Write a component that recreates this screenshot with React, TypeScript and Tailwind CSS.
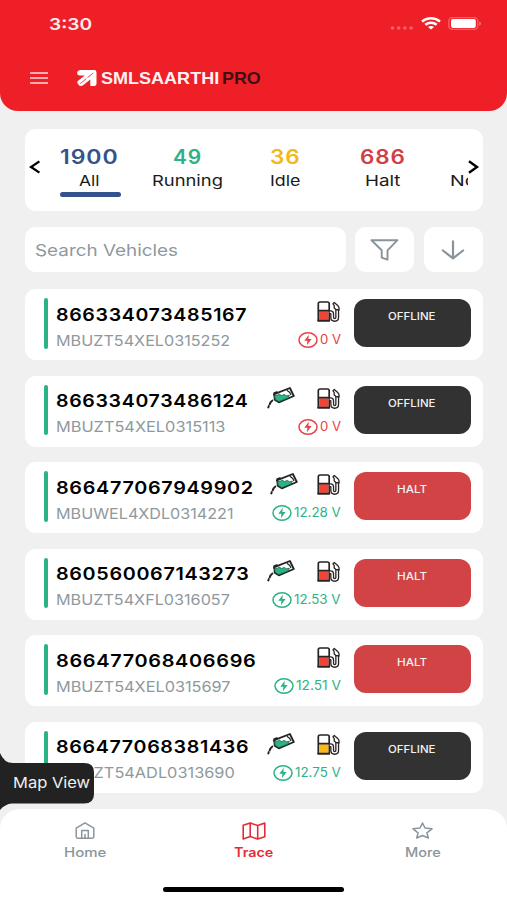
import { useLayoutEffect, useRef, useState, type ReactNode } from 'react';

type FitProps = { w: number; className?: string; children: ReactNode };

/** One line of text, widened to fill exactly `w` pixels. */
function Fit({ w, className = '', children }: FitProps) {
  const ref = useRef<HTMLSpanElement>(null);
  const [scale, setScale] = useState(1);
  useLayoutEffect(() => {
    if (ref.current) setScale(w / ref.current.offsetWidth);
  }, [w]);
  return (
    <div className={`shrink-0 ${className}`} style={{ width: w }}>
      <span ref={ref} className="inline-block origin-left whitespace-nowrap align-top" style={{ transform: `scaleX(${scale})` }}>
        {children}
      </span>
    </div>
  );
}

function StatusIcons() {
  return (
    <div className="flex items-center">
      <svg className="mt-[8px] h-1 w-[24px]" viewBox="0 0 24 4" fill="#fff" opacity=".3">
        <circle cx="2.5" cy="2" r="1.8" />
        <circle cx="8.7" cy="2" r="1.8" />
        <circle cx="14.9" cy="2" r="1.8" />
        <circle cx="21.1" cy="2" r="1.8" />
      </svg>
      <svg className="ml-[7px] h-[13px] w-[20px]" viewBox="0 0 20 13" fill="none" stroke="#fff" strokeWidth="2.5">
        <path d="M1 4.6C6 .2 14 .2 19 4.6" />
        <path d="M4.3 7.8c3.2-2.8 8.2-2.8 11.4 0" />
        <path d="M10 12.6 7 10.1c1.7-1.4 4.3-1.4 6 0z" fill="#fff" stroke="none" />
      </svg>
      <svg className="ml-[7px] h-[13px] w-[34px]" viewBox="0 0 34 13">
        <rect x=".8" y=".6" width="29" height="11.8" rx="3.6" fill="none" stroke="#fff" strokeOpacity=".3" strokeWidth="1.4" />
        <rect x="3" y="2.1" width="24.8" height="8.8" rx="1.8" fill="#fff" />
        <path d="M31.3 4.4c2.2.8 2.2 3.4 0 4.2z" fill="#fff" opacity=".4" />
      </svg>
    </div>
  );
}

function Logo() {
  return (
    <svg className="h-4 w-5" viewBox="0 0 20 16">
      <path d="M3 0H17.2Q19.500 0 19.500 2.400V13.500Q19.500 16 17 16H13.300V9.400L6.400 15Q4.600 16.400 2.200 15.600L.5 13.200Q-.2 11.500 1.500 10.400L7.600 5.600H2.400Q0 5 .1 2.800T3 0Z" fill="#fff" />
      <path d="M3.2 13.600 9.300 8.800M10.500 7.400l2.600-1.600M12.600 5.900l3.600-2.900" fill="none" stroke="#ef1f28" strokeWidth=".8" />
    </svg>
  );
}

function PumpIcon({ fill }: { fill: string }) {
  return (
    <svg className="h-[21px] w-[23px]" viewBox="0 0 23 21" fill="none" stroke="#2a2323" strokeWidth="1.7" strokeLinejoin="round">
      <path d="M1.300 2.800Q1.300 1 3 1h7.500q1.700 0 1.700 1.800V19.600H1.300Z" fill="#fff" />
      <path d="M2.100 10.200H11.400v8.600H2.100Z" fill={fill} stroke="none" />
      <path d="M1.300 9.600H12.200M.4 19.700h12.700" />
      <path d="M12.800 11.300h.7q1.700 0 1.700 1.700v3.600q0 2.300 2.500 2.300t2.500-2.300V7.500" stroke="#2a2323" strokeWidth="4" />
      <path d="M12.800 11.300h.7q1.700 0 1.700 1.700v3.600q0 2.300 2.500 2.300t2.500-2.300V7" stroke="#fff" strokeWidth="1.4" />
      <path d="M16 2.800 17.300 1.500 20.700 4.400Q22 5.500 22 7v2L19 8.500 17.200 7V4.500Z" fill="#fff" strokeWidth="1.300" />
    </svg>
  );
}

function PourIcon() {
  return (
    <svg className="h-[22px] w-[28px]" viewBox="0 0 28 22" fill="none" stroke="#222" strokeWidth="1.8" strokeLinejoin="round">
      <path d="M7.300 7.200 22.900 1l3.900 8-15 6.300-4.100-2.600Z" fill="#fff" />
      <path d="M7.500 7.600 10 8.400l2.200-1.400 2.300 1.600 2.700-1.200 2.200 1.400 3-.6-1.400 2.800-9.200 3.600-3.700-2.500Z" fill="#2bb286" stroke="#17654c" strokeWidth=".8" />
      <path d="m19.900 3.200 2.900 2.200 1.200 2.500" strokeWidth="1.200" />
      <path d="M6.600 6.300 10.600 4.900M6.700 6.500l.7 2" />
      <path d="M5.900 13Q3.200 14.800 2.500 18M2 18.200 1.100 21.200" strokeWidth="1.900" />
    </svg>
  );
}

function BoltIcon() {
  return (
    <svg className="h-4 w-5" viewBox="0 0 20 16">
      <ellipse cx="10" cy="8" rx="9" ry="7.200" fill="none" stroke="currentColor" strokeWidth="1.500" />
      <path d="M10.800 2.700 6.300 8.800h3.100l-.5 4.500 4.700-6.200h-3.200Z" fill="currentColor" />
    </svg>
  );
}

type Vehicle = {
  imei: string; imeiW: number; vin: string; vinW: number;
  volt: string; voltW: number; pour: boolean; pump: string; status: 'OFFLINE' | 'HALT'; shift?: boolean;
};

const RED = '#ef4538';
const vehicles: Vehicle[] = [
  { imei: '866334073485167', imeiW: 191, vin: 'MBUZT54XEL0315252', vinW: 174, volt: '0 V', voltW: 21, pour: false, pump: RED, status: 'OFFLINE' },
  { imei: '866334073486124', imeiW: 192, vin: 'MBUZT54XEL0315113', vinW: 169, volt: '0 V', voltW: 21, pour: true, pump: RED, status: 'OFFLINE' },
  { imei: '866477067949902', imeiW: 198, vin: 'MBUWEL4XDL0314221', vinW: 177, volt: '12.28 V', voltW: 47, pour: true, pump: RED, status: 'HALT', shift: true },
  { imei: '860560067143273', imeiW: 194, vin: 'MBUZT54XFL0316057', vinW: 174, volt: '12.53 V', voltW: 47, pour: true, pump: RED, status: 'HALT' },
  { imei: '866477068406696', imeiW: 200, vin: 'MBUZT54XEL0315697', vinW: 175, volt: '12.51 V', voltW: 45, pour: false, pump: RED, status: 'HALT' },
  { imei: '866477068381436', imeiW: 193, vin: 'MBUZT54ADL0313690', vinW: 179, volt: '12.75 V', voltW: 46, pour: true, pump: '#f8b917', status: 'OFFLINE' },
];

function VehicleCard({ v }: { v: Vehicle }) {
  return (
    <div className="flex h-[71px] shrink-0 items-start rounded-[11px] bg-white pl-[18.5px]">
      <div className="mt-[9px] h-[50.5px] w-[4.5px] shrink-0 rounded-full bg-[#2bb286]" />
      <div className="ml-2 w-[285px] shrink-0">
        <div className="flex h-[38px] items-start">
          <Fit w={v.imeiW} className="mt-[11.5px] text-[17.5px] font-semibold leading-[28px] tracking-[0.6px] text-black">{v.imei}</Fit>
          <div className="ml-auto flex pt-[12px]">
            {v.pour && <div className={v.shift ? '-mt-px mr-[19px]' : '-mt-px mr-[22px]'}><PourIcon /></div>}
            <div className="mr-[1px]"><PumpIcon fill={v.pump} /></div>
          </div>
        </div>
        <div className="flex h-[26px] items-center">
          <Fit w={v.vinW} className="pt-px text-[14.5px] leading-[26px] text-[#8f999d]">{v.vin}</Fit>
          <div className={`ml-auto flex items-center gap-[2px] ${v.volt === '0 V' ? 'text-[#e8404a]' : 'text-[#2bb286]'}`}>
            <BoltIcon />
            <Fit w={v.voltW} className="text-[12.5px] leading-[24px]">{v.volt}</Fit>
          </div>
        </div>
      </div>
      <div className={`ml-[12.5px] mt-[10px] flex h-12 w-[117px] shrink-0 justify-center rounded-[12px] pt-[8px] ${v.status === 'HALT' ? 'bg-[#d14345]' : 'bg-[#323232]'}`}>
        <Fit w={v.status === 'HALT' ? 30 : 48} className="text-[10.5px] font-medium leading-[20px] text-[#f2f2f2]">{v.status}</Fit>
      </div>
    </div>
  );
}

const tabs = [
  { n: '1900', nw: 59, label: 'All', lw: 21, color: 'text-[#34528b]' },
  { n: '49', nw: 29, label: 'Running', lw: 71, color: 'text-[#2bb286]' },
  { n: '36', nw: 30, label: 'Idle', lw: 31, color: 'text-[#f3b71c]' },
  { n: '686', nw: 46, label: 'Halt', lw: 35, color: 'text-[#cf4145]' },
];

export default function App() {
  return (
    <div className="relative flex h-[900px] w-[507px] flex-col overflow-hidden bg-[#f0f0f0] font-['Inter','Liberation_Sans',sans-serif]">
      <header className="h-[111px] shrink-0 rounded-b-[18px] bg-[#ef1f28]">
        <div className="flex h-[47px] items-center justify-between pl-[49px] pr-[25px]">
          <Fit w={43} className="pt-px text-[16.5px] font-semibold leading-[47px] text-[#ffeaea]">3:30</Fit>
          <StatusIcons />
        </div>
        <div className="flex h-[62px] items-center pl-[30px]">
          <svg className="h-3 w-[18px]" viewBox="0 0 18 12" stroke="#ffdcdc" strokeWidth="1.4">
            <path d="M0 1h18M0 6h18M0 11h18" />
          </svg>
          <div className="ml-[29px]"><Logo /></div>
          <Fit w={118} className="ml-[4px] font-['Liberation_Sans',sans-serif] text-[16.5px] font-bold leading-[30px] text-[#fff2f2]">SMLSAARTHI</Fit>
          <Fit w={39} className="ml-[3px] font-['Liberation_Sans',sans-serif] text-[16.5px] font-bold leading-[30px] text-[#3c1214]">PRO</Fit>
        </div>
      </header>

      <main className="flex flex-col px-[25px] pr-[24px] pt-[18px]">
        <section className="flex h-[82px] rounded-[11px] bg-white">
          <svg className="ml-1 mt-[31px] h-[14px] w-[12px] shrink-0" viewBox="0 0 12 14" fill="none" stroke="#000" strokeWidth="2.3">
            <path d="M10.400 1.400 2 7l8.400 5.600" />
          </svg>
          <div className="flex w-[427px] shrink-0 overflow-hidden">
            {tabs.map((t, i) => (
              <div key={t.n} className="flex w-[97.7px] shrink-0 flex-col items-center pt-[16px]">
                <Fit w={t.nw} className={`text-[19.5px] font-semibold leading-[24px] tracking-[0.8px] ${t.color}`}>{t.n}</Fit>
                <Fit w={t.lw} className="text-[15px] leading-[23px] text-[#1b1b1b]">{t.label}</Fit>
                {i === 0 && <div className="ml-px h-[5px] w-[61px] rounded-full bg-[#34528b]" />}
              </div>
            ))}
            <div className="w-[36px] shrink-0 overflow-hidden pl-[18px] pt-[40px]">
              <Fit w={26} className="text-[15px] leading-[23px] text-[#1b1b1b]">No</Fit>
            </div>
          </div>
          <svg className="mt-[31px] h-[14px] w-[12px] shrink-0" viewBox="0 0 12 14" fill="none" stroke="#000" strokeWidth="2.4">
            <path d="M1 1.200 9 7l-8 5.800" />
          </svg>
        </section>

        <div className="mt-4 flex h-[45px]">
          <div className="flex w-[321px] items-center rounded-[11px] bg-white pl-[10px]">
            <Fit w={143} className="pt-[2px] text-[16.5px] leading-[45px] text-[#8f999d]">Search Vehicles</Fit>
          </div>
          <div className="ml-[8.5px] flex w-[59.5px] items-center justify-center rounded-[11px] bg-white">
            <svg className="h-[22px] w-[29px]" viewBox="0 0 29 22" fill="none" stroke="#89949a" strokeWidth="1.9" strokeLinejoin="round">
              <path d="M1.500 1.200H27.500L17.500 11.300V20.700L11.700 18.600V11.300Z" />
            </svg>
          </div>
          <div className="ml-[10px] flex w-[59px] items-center justify-center rounded-[11px] bg-white pr-[2px]">
            <svg className="h-[20px] w-[24px]" viewBox="0 0 24 20" fill="none" stroke="#89949a" strokeWidth="2.200" strokeLinecap="round" strokeLinejoin="round">
              <path d="M12 1.400V18.300M1.900 10.500 12 18.300l10.100-7.800" />
            </svg>
          </div>
        </div>

        <div className="mt-[17px] flex flex-col gap-[15.6px]">
          {vehicles.map((v) => <VehicleCard key={v.imei} v={v} />)}
        </div>
      </main>

      <nav className="mt-auto h-[91px] shrink-0 rounded-t-[20px] bg-white">
        <div className="flex h-[78px] pt-[13px]">
          <div className="flex w-[169px] flex-col items-center text-[#8b9599]">
            <svg className="h-[17px] w-[20px]" viewBox="0 0 20 17" fill="none" stroke="currentColor" strokeWidth="1.5" strokeLinejoin="round">
              <path d="M1.200 6.200 10 .9l8.800 5.300v8.600q0 1.400-1.600 1.400H2.800Q1.200 16.200 1.200 14.800ZM6.700 16V8.600h6.600V16M10 16v-4" />
            </svg>
            <Fit w={42} className="mt-[3px] text-[12.5px] font-medium leading-[22px]">Home</Fit>
          </div>
          <div className="flex w-[169px] flex-col items-center text-[#e52b38]">
            <svg className="h-[18px] w-[24px]" viewBox="0 0 24 18" fill="none" stroke="currentColor" strokeWidth="1.6" strokeLinejoin="round">
              <path d="M1.200 3.200 8.200.9l7.500 2.700 7.100-2.500v13.600l-7.100 2.400-7.500-2.600-7 2.500ZM8.200.9v13.600M15.700 3.600v13.500" />
            </svg>
            <Fit w={39} className="mt-[2px] text-[12.5px] font-semibold leading-[22px]">Trace</Fit>
          </div>
          <div className="flex w-[169px] flex-col items-center text-[#8b9599]">
            <svg className="h-[17px] w-[21px]" viewBox="0 0 21 17" fill="none" stroke="currentColor" strokeWidth="1.5" strokeLinejoin="round">
              <path d="m10.500 1 2.500 5 7 .8-5.100 4 1.400 5.200-5.800-2.500L4.700 16l1.400-5.200L1 6.800 8 6Z" />
            </svg>
            <Fit w={36} className="mt-[3px] text-[12.5px] font-medium leading-[22px]">More</Fit>
          </div>
        </div>
        <div className="mx-auto h-[5px] w-[181px] rounded-full bg-black" />
      </nav>

      <div className="absolute left-0 top-[753px] h-[57px] w-[95px]">
        <svg className="absolute inset-0" width="95" height="57" viewBox="0 0 95 57">
          <path d="M0 0Q4 10 13 10H84Q94 10 94 19V41Q94 50.500 84 50.500H12Q5 51 0 57Z" fill="#222" />
        </svg>
        <div className="relative pl-[13px] pt-[19px]">
          <Fit w={77} className="text-[15px] leading-[21px] text-[#efefef]">Map View</Fit>
        </div>
      </div>
    </div>
  );
}
